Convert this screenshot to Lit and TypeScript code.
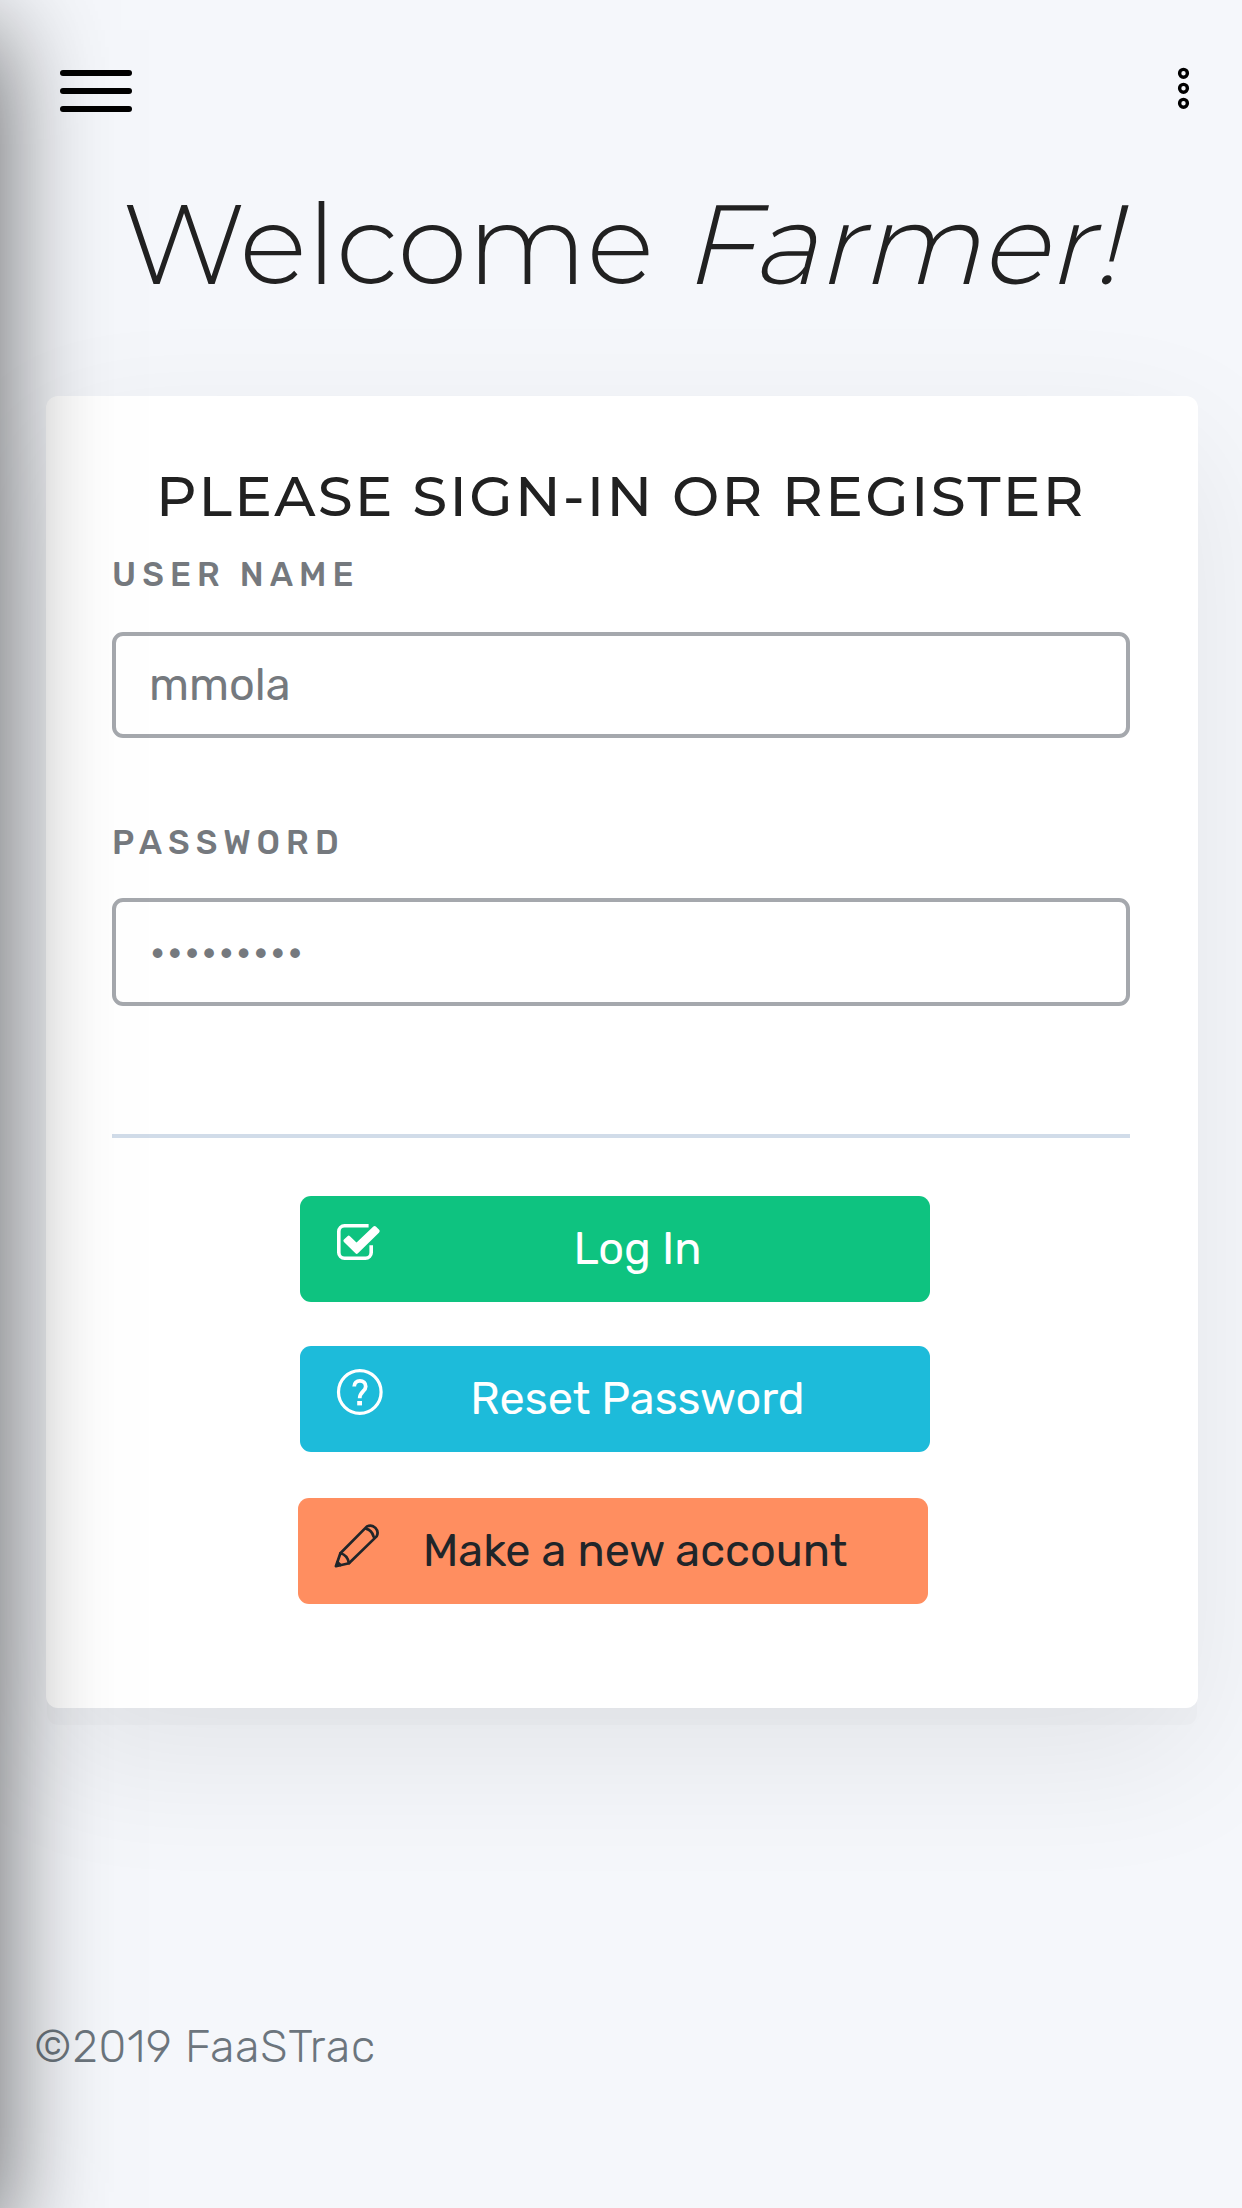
import { LitElement, html, css, svg } from "lit";
import { customElement, property } from "lit/decorators.js";

const icons = {
  check: svg`
    <path d="M31.6 6.8H7.6A5.8 5.8 0 0 0 1.8 12.6V33.4A5.8 5.8 0 0 0 7.6 39.2H28.4A5.8 5.8 0 0 0 34.2 33.4V26.2" fill="none" stroke="currentColor" stroke-width="3.6"/>
    <path d="M8.2 21.8L11.7 18.5L19.5 26L37.6 8.9L40.9 12.1L19.7 33Z" fill="currentColor" stroke="currentColor" stroke-width="3.6" stroke-linejoin="round"/>`,
  help: svg`
    <circle cx="22.8" cy="23" r="21.3" fill="none" stroke="currentColor" stroke-width="3.2"/>
    <path d="M17.2 17.6C17.2 13.8 19.6 11.9 22.9 11.9C26.4 11.9 28.7 14.1 28.7 17.4C28.7 22.4 22.7 22.6 22.7 29.3" fill="none" stroke="currentColor" stroke-width="3.8"/>
    <rect x="20.2" y="32" width="4.8" height="4.4" fill="currentColor"/>`,
  pencil: svg`
    <g fill="none" stroke="currentColor" stroke-width="2.7" stroke-linejoin="round" stroke-linecap="round">
      <path d="M1.9 44.2L6.4 31.3L33 4.4A7.3 7.3 0 0 1 42.6 14.4L15 41.2Z"/>
      <path d="M6.4 31.3Q13.4 33 15 41.2M32 6.6Q38 8.2 39.6 14.6M3.6 40.2L6.4 43"/>
    </g>`,
};

@customElement("action-button")
class ActionButton extends LitElement {
  @property() icon: keyof typeof icons = "check";
  @property() label = "";

  static styles = css`
    :host {
      display: block;
    }
    .button {
      box-sizing: border-box;
      display: flex;
      align-items: center;
      width: 630px;
      height: 106px;
      padding: 0 var(--pad-end, 38px) 0 var(--pad-start, 37px);
      border: 0;
      border-radius: 11px;
      background: var(--fill);
      color: var(--ink, #fff);
      font: 400 45px/68px "Rubik", "Roboto", sans-serif;
    }
    .icon {
      flex: none;
      width: 46px;
      height: 46px;
      margin-bottom: var(--lift, 14px);
      overflow: visible;
    }
    .label {
      flex: 1;
      text-align: center;
      white-space: nowrap;
    }
  `;

  render() {
    return html`<button class="button" type="button">
      <svg class="icon" viewBox="0 0 46 46" aria-hidden="true">${icons[this.icon]}</svg>
      <span class="label">${this.label}</span>
    </button>`;
  }
}

@customElement("app-root")
class AppRoot extends LitElement {
  static styles = css`
    :host {
      display: block;
      position: relative;
      box-sizing: border-box;
      width: 100%;
      height: 2208px;
      overflow: hidden;
      background: #f5f7fb;
      font-family: "Rubik", "Roboto", sans-serif;
    }
    .drawer {
      position: absolute;
      left: -700px;
      top: 30px;
      width: 700px;
      height: 2212px;
      box-shadow: 0 0 100px rgba(0, 0, 0, 0.62);
      pointer-events: none;
    }
    .bar {
      display: flex;
      justify-content: space-between;
      align-items: flex-start;
      height: 106px;
      padding: 70px 52px 0 60px;
    }
    .burger {
      display: flex;
      flex-direction: column;
      gap: 12px;
      width: 72px;
    }
    .line {
      height: 6px;
      border-radius: 3px;
      background: #000;
    }
    .more {
      width: 13px;
      height: 44px;
      margin-top: -3px;
    }
    .welcome {
      margin: 0;
      font: 300 112.5px/136px "Montserrat", "Inter", sans-serif;
      color: #212121;
      text-align: center;
      white-space: nowrap;
    }
    .name {
      display: inline-block;
      font-style: normal;
      transform: skewX(-14deg);
      transform-origin: 0 108px;
    }
    .card {
      box-sizing: border-box;
      width: 1152px;
      height: 1312px;
      margin: 84px 0 0 46px;
      padding: 66px 68px 0 66px;
      border-radius: 12px;
      background: #fff;
      box-shadow: 0 18px 0 -1px rgba(0, 0, 0, 0.014), 0 48px 144px rgba(0, 0, 0, 0.078);
    }
    .title {
      margin: 0 0 19px;
      font: 500 56.25px/68px "Montserrat", "Inter", sans-serif;
      letter-spacing: 2.3px;
      color: #212121;
      text-align: center;
      text-transform: uppercase;
      white-space: nowrap;
    }
    .caption {
      display: block;
      font-weight: 500;
      font-size: 33.75px;
      line-height: 50px;
      letter-spacing: 6.1px;
      color: #75797e;
      text-transform: uppercase;
    }
    .second {
      margin-top: 79px;
    }
    .field {
      box-sizing: border-box;
      display: block;
      width: 100%;
      height: 106px;
      margin: 33px 0 0;
      padding: 0 33px 2px;
      border: 4px solid #a5a8ad;
      border-radius: 11px;
      background: transparent;
      font: 400 45px/68px "Rubik", "Roboto", sans-serif;
      color: #75797e;
      outline: none;
    }
    .field.secret {
      height: 108px;
      margin-top: 31px;
    }
    .rule {
      height: 4px;
      margin: 128px 0 58px;
      border: 0;
      background: #d1dce9;
    }
    .actions {
      display: flex;
      flex-direction: column;
      gap: 44px;
      padding-left: 188px;
    }
    .login {
      --fill: #0ec380;
    }
    .reset {
      --fill: #1dbbda;
    }
    .create {
      --fill: #ff8e60;
      --ink: #212529;
      --lift: 13px;
      --pad-start: 36px;
      --pad-end: 38px;
      margin: 2px 0 0 -2px;
    }
    .footer {
      margin: 305px 0 0 34px;
      font-weight: 300;
      font-size: 45px;
      line-height: 68px;
      letter-spacing: 0.9px;
      color: #6c757d;
    }
  `;

  render() {
    return html`
      <header class="bar">
        <div class="burger">
          <div class="line"></div>
          <div class="line"></div>
          <div class="line"></div>
        </div>
        <svg class="more" viewBox="0 0 13 44" aria-hidden="true">
          <g fill="none" stroke="#000" stroke-width="3.4">
            <circle cx="6.5" cy="6.3" r="3.9" />
            <circle cx="6.5" cy="21.3" r="3.9" />
            <circle cx="6.5" cy="36.3" r="3.9" />
          </g>
        </svg>
      </header>
      <h1 class="welcome">Welcome <em class="name">Farmer!</em></h1>
      <main class="card">
        <h2 class="title">Please sign-in or register</h2>
        <label class="caption" for="user">User name</label>
        <input class="field" id="user" type="text" .value=${"mmola"} />
        <label class="caption second" for="pass">Password</label>
        <input class="field secret" id="pass" type="password" .value=${"farmtrack"} />
        <hr class="rule" />
        <div class="actions">
          <action-button class="login" icon="check" label="Log In"></action-button>
          <action-button class="reset" icon="help" label="Reset Password"></action-button>
          <action-button class="create" icon="pencil" label="Make a new account"></action-button>
        </div>
      </main>
      <footer class="footer">©2019 FaaSTrac</footer>
      <div class="drawer"></div>
    `;
  }
}
